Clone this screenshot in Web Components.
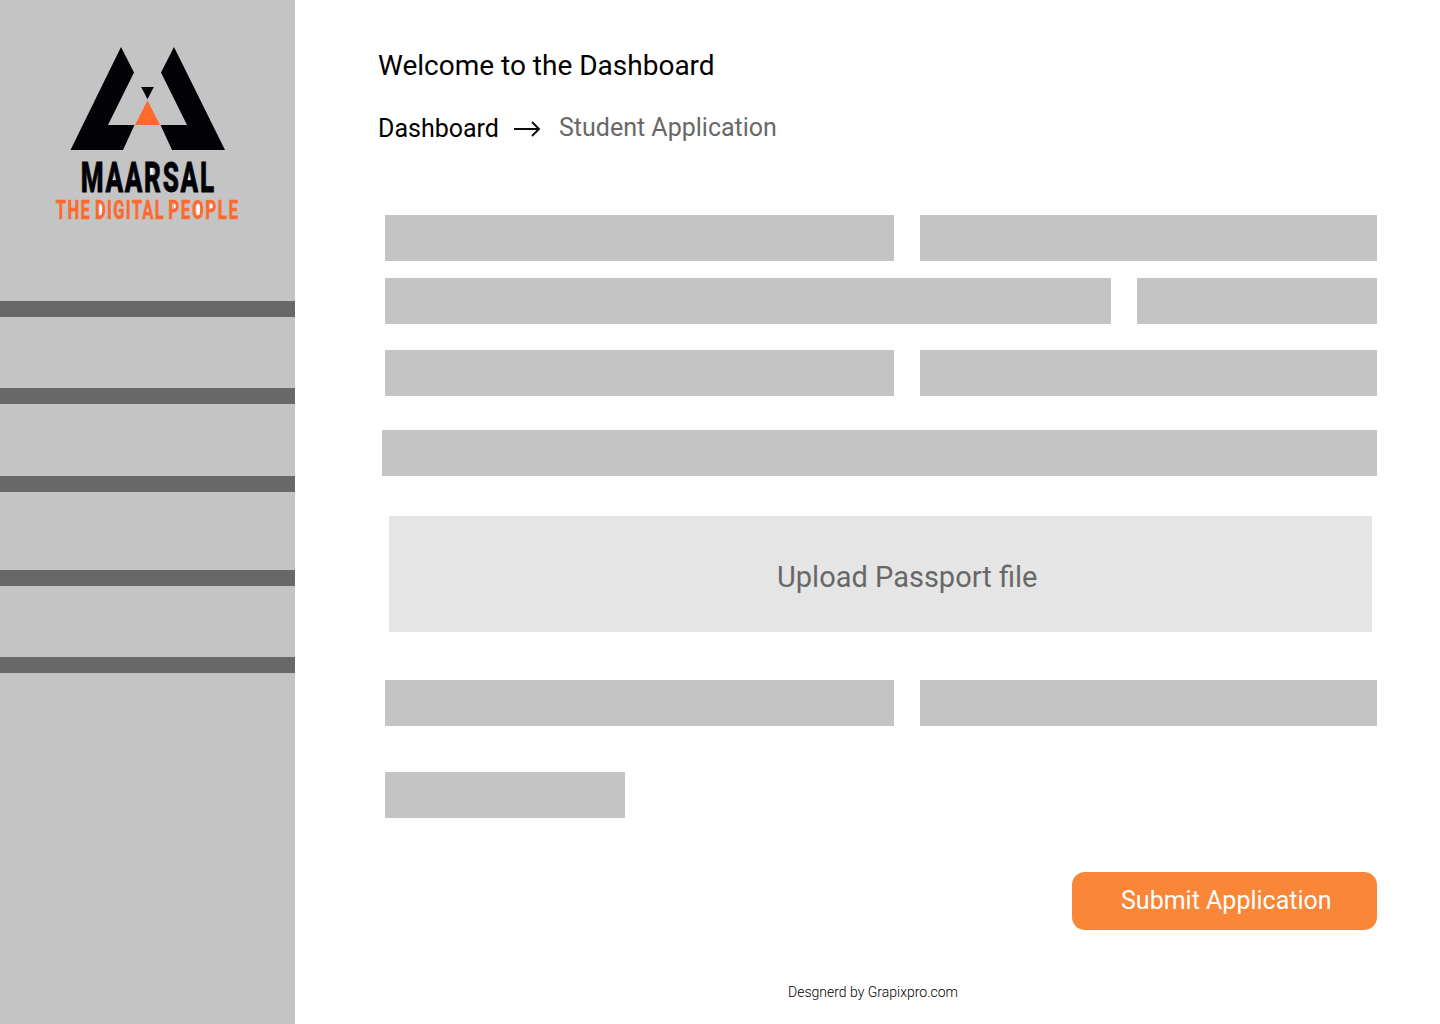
<!DOCTYPE html>
<html lang="en">
<head>
<meta charset="utf-8">
<title>Student Application</title>
<style>
body { margin: 0; background: #fff; font-family: Roboto, "Liberation Sans", sans-serif; }
</style>
</head>
<body>
<app-shell>
  <side-bar slot="side"><brand-logo></brand-logo></side-bar>
  <page-title>Welcome to the Dashboard</page-title>
  <bread-crumb><span slot="from">Dashboard</span><span slot="to">Student Application</span></bread-crumb>
  <application-form>
    <upload-box>Upload Passport file</upload-box>
    <submit-button slot="action">Submit Application</submit-button>
  </application-form>
  <page-credit>Desgnerd by Grapixpro.com</page-credit>
</app-shell>
<script>
function define(name, html) {
  const template = document.createElement('template');
  template.innerHTML = html;
  customElements.define(name, class extends HTMLElement {
    constructor() {
      super();
      this.attachShadow({ mode: 'open' }).append(template.content.cloneNode(true));
    }
  });
}

define('app-shell', `
<style>
:host { display: flex; width: 1440px; height: 1024px; overflow: hidden; background: #fff; }
main { display: flex; flex-direction: column; flex: 1; min-width: 0; }
</style>
<slot name="side"></slot><main><slot></slot></main>`);

define('side-bar', `
<style>
:host { display: block; flex: none; width: 295px; height: 1024px; background: #c4c4c4; }
header { height: 301px; }
i { display: block; height: 16px; background: #686868; margin-bottom: 71px; }
i:nth-of-type(2) { margin-bottom: 72px; }
i:nth-of-type(3) { margin-bottom: 78px; }
</style>
<header><slot></slot></header>
<nav><i></i><i></i><i></i><i></i><i></i></nav>`);

define('brand-logo', `
<style>
:host { display: block; }
svg { display: block; overflow: visible; }
text { font-family: Roboto, sans-serif; font-weight: 800; }
</style>
<svg width="295" height="240" viewBox="0 0 295 240">
  <g fill="#030307">
    <path d="M121 47L134 72.500L108 125H134.500L123 150H70.500Z"/>
    <path d="M174 47L225 150H172L160.500 125H187L161 72.500Z"/>
    <path d="M141.200 87H153.800L147.500 99.200Z"/>
  </g>
  <path fill="#fd6a30" d="M147.500 100.500L160 125H135Z"/>
  <g fill="#fff">
    <path d="M112.500 174L114.800 183H110.200ZM130 174L132.300 183H127.700ZM188.500 174L190.800 183H186.200Z"/>
    <path d="M148.500 167H152.500V174H148.500ZM99.500 203H102.500V215H99.500ZM174 203H177V208H174ZM196.500 203H200V215H196.500ZM210 203H213V208H210ZM146.500 207L148 212H145Z"/>
  </g>
  <text transform="translate(80.700 192) scale(.62 1)" font-size="42" textLength="215" fill="#030307" stroke="#030307" stroke-width=".8">MAARSAL</text>
  <g font-size="26" fill="#fd6a30" stroke="#fd6a30" stroke-width=".3">
    <text transform="translate(55.700 218.500) scale(.64 1)" textLength="53.500">THE</text>
    <text transform="translate(95 218.500) scale(.64 1)" textLength="107.500">DIGITAL</text>
    <text transform="translate(168.300 218.500) scale(.66 1)" textLength="106">PEOPLE</text>
  </g>
</svg>`);

define('page-title', `
<style>
:host { display: block; margin: 49px 0 0 83px; height: 33px; font-size: 28px; line-height: 33px; color: #000; white-space: nowrap; }
</style><slot></slot>`);

define('bread-crumb', `
<style>
:host { display: flex; margin: 31px 0 0 83px; height: 32px; font-size: 25px; line-height: 30px; white-space: nowrap; }
.from { width: 135px; padding-top: 1px; color: #000; }
.to { color: #686868; }
svg { display: block; flex: none; width: 46px; height: 32px; }
</style>
<div class="from"><slot name="from"></slot></div>
<svg viewBox="0 0 46 32" fill="none" stroke="#0c0c10" stroke-width="1.900"><path d="M1 16H26M19 9L26 16L19 23"/></svg>
<div class="to"><slot name="to"></slot></div>`);

define('form-field', `
<style>
:host { display: block; flex: none; height: 46px; background: #c4c4c4; }
</style>`);

define('application-form', `
<style>
:host { display: block; margin: 70px 63px 0 87px; }
.row { display: flex; gap: 26px; padding-left: 3px; }
.first { margin-bottom: 17px; }
.second { margin-bottom: 26px; }
.third { margin-bottom: 34px; }
.half { width: 509px; }
.long { width: 726px; }
.short { width: 240px; }
.rest { flex: 1; }
.upload { padding: 40px 5px 48px 7px; }
.last { margin: 46px 0 54px; }
.action { display: flex; justify-content: flex-end; }
</style>
<div class="row first"><form-field class="half"></form-field><form-field class="rest"></form-field></div>
<div class="row second"><form-field class="long"></form-field><form-field class="short"></form-field></div>
<div class="row third"><form-field class="half"></form-field><form-field class="rest"></form-field></div>
<form-field></form-field>
<div class="upload"><slot></slot></div>
<div class="row"><form-field class="half"></form-field><form-field class="rest"></form-field></div>
<div class="row last"><form-field class="short"></form-field></div>
<div class="action"><slot name="action"></slot></div>`);

define('upload-box', `
<style>
:host { display: block; box-sizing: border-box; height: 116px; padding: 44px 0 0 388px; background: #e5e5e5; color: #686868; font-size: 29px; line-height: 35px; white-space: nowrap; }
</style><slot></slot>`);

define('submit-button', `
<style>
button { display: block; box-sizing: border-box; width: 305px; height: 58px; margin: 0; padding: 0 0 0 49px; border: 0; border-radius: 13px; background: #fa8637; color: #fff; font: 400 25px/58px Roboto, sans-serif; text-align: left; white-space: nowrap; }
</style><button type="button"><slot></slot></button>`);

define('page-credit', `
<style>
:host { display: block; margin: 54px 0 0 493px; font-size: 14px; line-height: 17px; font-weight: 300; color: #000; white-space: nowrap; }
</style><slot></slot>`);
</script>
</body>
</html>
